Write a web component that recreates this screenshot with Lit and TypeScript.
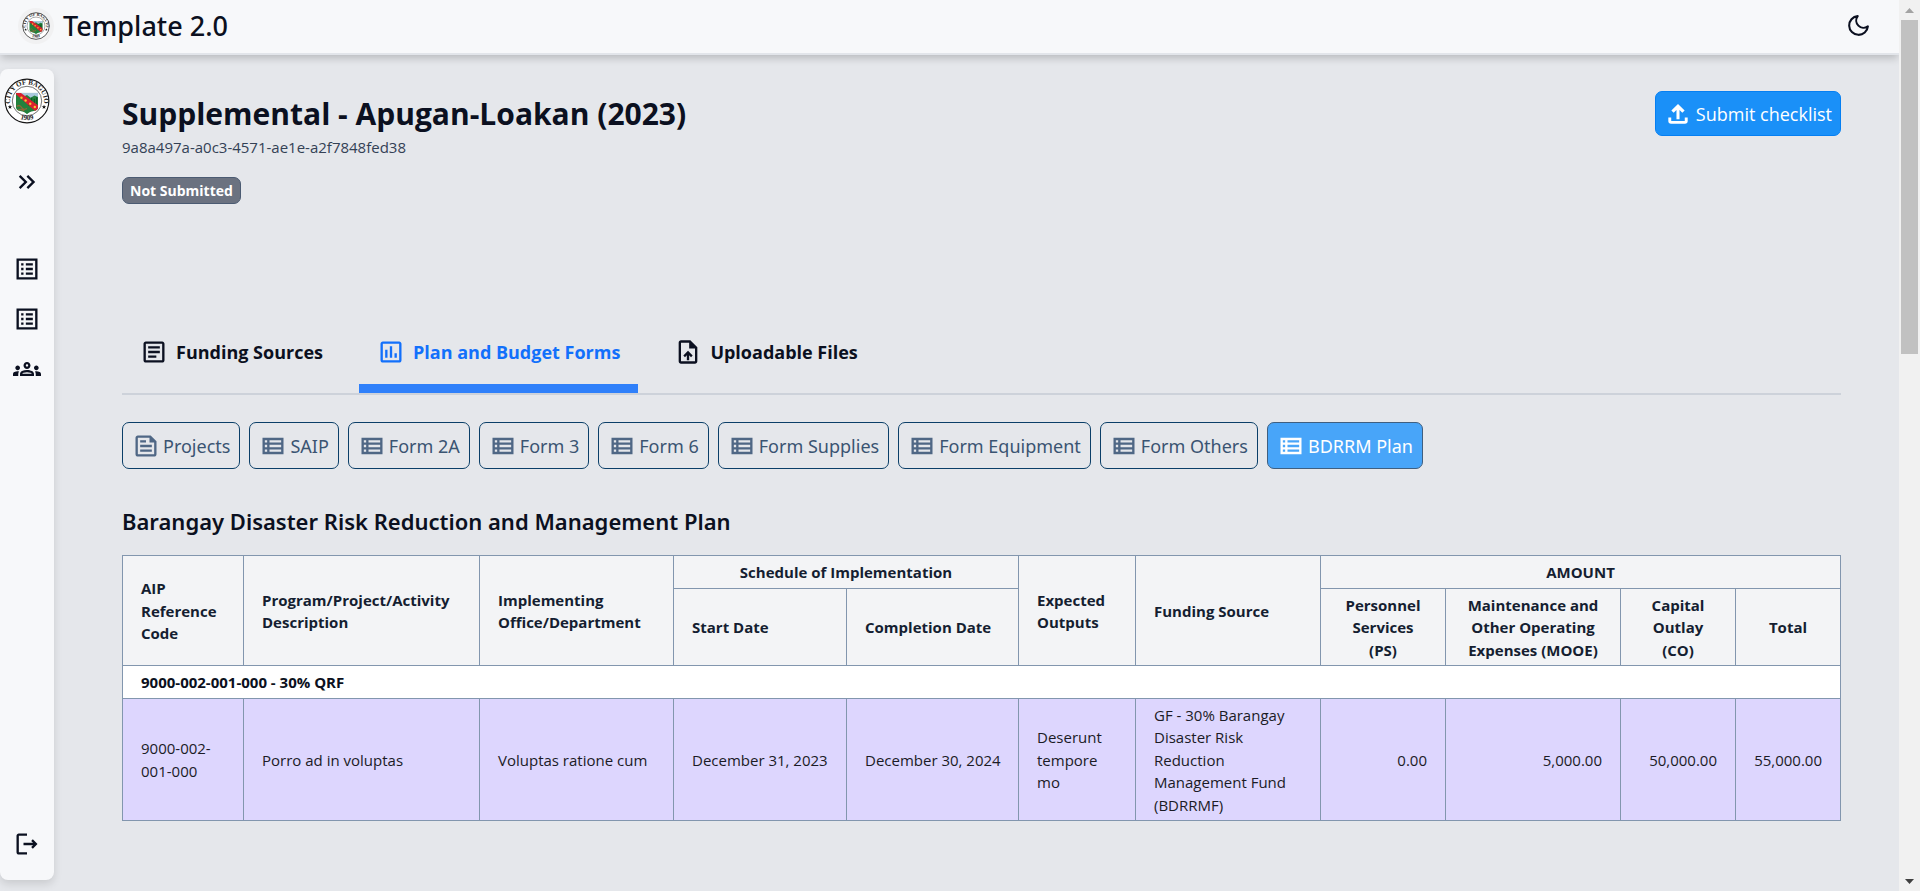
import { LitElement, html, css, svg } from "lit";
import { customElement, property, state } from "lit/decorators.js";
import { classMap } from "lit/directives/class-map.js";

const ICONS: Record<string, string> = {
  chevrons: "M6.41 6 5 7.41 9.58 12 5 16.59 6.41 18l6-6zM13 6l-1.41 1.41L16.17 12l-4.58 4.59L13 18l6-6z",
  list: "M3 3v18h18V3zm16 16H5V5h14zM11 7h6v2h-6zm0 4h6v2h-6zm0 4h6v2h-6zM7 7h2v2H7zm0 4h2v2H7zm0 4h2v2H7z",
  groups:
    "M4 13c1.1 0 2-.9 2-2s-.9-2-2-2-2 .9-2 2 .9 2 2 2zm1.13 1.1c-.37-.06-.74-.1-1.13-.1-.99 0-1.93.21-2.78.58C.48 14.9 0 15.62 0 16.43V18h4.5v-1.61c0-.83.23-1.61.63-2.29zM20 13c1.1 0 2-.9 2-2s-.9-2-2-2-2 .9-2 2 .9 2 2 2zm4 3.43c0-.81-.48-1.53-1.22-1.85-.85-.37-1.79-.58-2.78-.58-.39 0-.76.04-1.13.1.4.68.63 1.46.63 2.29V18H24v-1.57zm-7.76-2.78c-1.17-.52-2.61-.9-4.24-.9-1.63 0-3.07.39-4.24.9C6.68 14.13 6 15.21 6 16.39V18h12v-1.61c0-1.18-.68-2.26-1.76-2.74zM8.07 16c.09-.23.13-.39.91-.69.97-.38 1.99-.56 3.02-.56s2.05.18 3.02.56c.77.3.81.46.91.69H8.07zM12 8c.55 0 1 .45 1 1s-.45 1-1 1-1-.45-1-1 .45-1 1-1m0-2c-1.66 0-3 1.34-3 3s1.34 3 3 3 3-1.34 3-3-1.34-3-3-3z",
  logout: "m17 8-1.41 1.41L17.17 11H9v2h8.17l-1.58 1.58L17 16l4-4-4-4zM5 5h7V3H5c-1.1 0-2 .9-2 2v14c0 1.1.9 2 2 2h7v-2H5V5z",
  upload:
    "M10.700 16.500V8.600l-2.400 2.300L6.300 9 12 3.400 17.700 9l-2 1.900-2.400-2.300v7.900zM6 20.400c-.7 0-1.300-.2-1.700-.6-.4-.4-.6-.9-.6-1.600V15h2.500v3h11.600v-3h2.500v3.200c0 .7-.2 1.200-.6 1.600-.4.4-1 .6-1.700.6z",
  article:
    "M19 5v14H5V5h14m0-2H5c-1.1 0-2 .9-2 2v14c0 1.1.9 2 2 2h14c1.1 0 2-.9 2-2V5c0-1.1-.9-2-2-2zm-5 14H7v-2h7v2zm3-4H7v-2h10v2zm0-4H7V7h10v2z",
  chart:
    "M9 17H7v-7h2v7zm4 0h-2V7h2v10zm4 0h-2v-4h2v4zm2 2H5V5h14v14zm0-16H5c-1.1 0-2 .9-2 2v14c0 1.1.9 2 2 2h14c1.1 0 2-.9 2-2V5c0-1.1-.9-2-2-2z",
  file:
    "M14 2H6c-1.1 0-2 .9-2 2v16c0 1.1.89 2 1.99 2H18c1.1 0 2-.9 2-2V8l-6-6zm4 18H6V4h7v5h5v11zM8 15.01l1.41 1.41L11 14.84V19h2v-4.16l1.59 1.59L16 15.01 12.01 11 8 15.01z",
  feed:
    "M16 3H5c-1.1 0-2 .9-2 2v14c0 1.1.9 2 2 2h14c1.1 0 2-.9 2-2V8l-5-5zm3 16H5V5h10v4h4v10zM7 17h10v-2H7v2zm5-10H7v2h5V7zm-5 6h10v-2H7v2z",
  rows:
    "M3 5v14h18V5H3zm4 2v2H5V7h2zm-2 6v-2h2v2H5zm0 2h2v2H5v-2zm14 2H9v-2h10v2zm0-4H9v-2h10v2zm0-4H9V7h10v2z",
};

const icon = (name: string) => html`<svg class="icon" viewBox="0 0 24 24" aria-hidden="true">
  <path fill="currentColor" d=${ICONS[name]} />
</svg>`;

@customElement("city-seal")
export class CitySeal extends LitElement {
  static styles = css`
    :host { display: block; }
    svg { display: block; width: 100%; height: 100%; }
    .ring { font: 700 15px "Liberation Serif", serif; fill: #1c1c1c; }
  `;
  render() {
    return html`<svg viewBox="0 0 100 100" role="img" aria-label="City seal">
      ${svg`
        <defs>
          <path id="top" d="M15 63A37 37 0 1 1 85 63" />
          <path id="bottom" d="M22 82A46 46 0 0 0 78 82" />
          <clipPath id="shield"><path d="M26 32H74V63Q74 70 65 72Q54 74 50 79Q46 74 35 72Q26 70 26 63Z" /></clipPath>
        </defs>
        <circle cx="50" cy="50" r="47.500" fill="#fff" stroke="#151515" stroke-width="2.500" />
        <circle cx="50" cy="50" r="32" fill="#fff" stroke="#333" stroke-width="1.500" />
        <text class="ring"><textPath href="#top" startOffset="50%" text-anchor="middle">CITY OF BAGUIO</textPath></text>
        <text class="ring"><textPath href="#bottom" startOffset="50%" text-anchor="middle">1909</textPath></text>
        <path d="m13 58 1.300 3.200 3.400.2-2.600 2.200.9 3.400-3-1.900-3 1.900.9-3.400-2.600-2.200 3.400-.2z" fill="#111" />
        <path d="m87 58 1.300 3.200 3.400.2-2.600 2.200.9 3.400-3-1.900-3 1.900.9-3.400-2.600-2.200 3.400-.2z" fill="#111" />
        <g clip-path="url(#shield)">
          <rect x="24" y="31" width="52" height="50" fill="#23813c" />
          <path d="M24 31H76V42L66 38 58 43 50 37 40 42Z" fill="#a9c8dc" />
          <path d="M54 46v14M60 43v20M66 45v22M71 42v20" stroke="#0d5a25" stroke-width="3" />
          <path d="M28 62q6-5 10 2t12 2M30 70q8-4 14 2" stroke="#8a6a36" stroke-width="3" fill="none" />
          <path d="M22 32H36L78 62V76L70 74Z" fill="#d9202e" />
          <circle cx="38" cy="43" r="2.600" fill="#f6c531" />
          <circle cx="47" cy="49" r="2.600" fill="#f6c531" />
          <circle cx="57" cy="56" r="2.600" fill="#f6c531" />
          <circle cx="67" cy="63" r="2.600" fill="#f6c531" />
        </g>
      `}
    </svg>`;
  }
}

@customElement("top-bar")
export class TopBar extends LitElement {
  static styles = css`
    :host { display: block; position: relative; }
    .bar {
      display: flex; align-items: center; gap: 9px;
      height: 51px; padding: 0 28px 2px 18px;
      background: #f7f8fa; border-bottom: 2px solid #e2e5ea;
      box-shadow: 0 4px 8px -1px rgba(0, 0, 0, 0.2);
    }
    .badge { width: 28px; height: 28px; padding: 4px; border-radius: 50%; background: #f1f1f2; }
    .name { flex: 1; font-family: "Noto Sans", sans-serif; font-size: 27px; line-height: 36px; font-weight: 500; }
    button { border: 0; padding: 0; background: none; color: inherit; cursor: pointer; }
    .moon { display: block; width: 25px; height: 25px; }
  `;
  render() {
    return html`<header class="bar">
      <city-seal class="badge"></city-seal>
      <span class="name">Template 2.0</span>
      <button type="button" aria-label="Toggle dark mode">
        <svg class="moon" viewBox="0 0 24 24" fill="none" stroke="currentColor" stroke-width="2" stroke-linejoin="round" aria-hidden="true">
          <path d="M21 12.790A9 9 0 1 1 11.210 3 7 7 0 0 0 21 12.790z" />
        </svg>
      </button>
    </header>`;
  }
}

@customElement("side-rail")
export class SideRail extends LitElement {
  static styles = css`
    :host { display: block; }
    .rail {
      box-sizing: border-box; height: 100%; width: 54px;
      display: flex; flex-direction: column; align-items: center;
      padding: 9px 0 22px; border-radius: 8px; background: #f7f8fa;
      box-shadow: 0 4px 8px rgba(0, 0, 0, 0.12);
    }
    .seal { width: 46px; height: 46px; }
    button, a { display: block; border: 0; padding: 0; background: none; color: inherit; cursor: pointer; }
    .expand { margin-top: 44px; }
    nav { display: flex; flex-direction: column; gap: 22px; margin-top: 59px; }
    .out { margin-top: auto; }
    .icon { display: block; width: 28px; height: 28px; }
  `;
  render() {
    return html`<aside class="rail">
      <city-seal class="seal"></city-seal>
      <button class="expand" type="button" aria-label="Expand menu">${icon("chevrons")}</button>
      <nav aria-label="Main">
        <a href="#annual" aria-label="Annual checklists">${icon("list")}</a>
        <a href="#supplemental" aria-label="Supplemental checklists">${icon("list")}</a>
        <a href="#users" aria-label="Users">${icon("groups")}</a>
      </nav>
      <button class="out" type="button" aria-label="Log out">${icon("logout")}</button>
    </aside>`;
  }
}

@customElement("scroll-track")
export class ScrollTrack extends LitElement {
  static styles = css`
    :host { display: flex; flex-direction: column; background: #f1f1f1; }
    .arrow { height: 20px; display: grid; place-items: center; }
    .arrow svg { width: 9px; height: 5px; }
    .lane { flex: 1; padding: 0 2px; }
    .thumb { height: 334px; background: #c1c1c1; }
  `;
  render() {
    return html`<div class="arrow"><svg viewBox="0 0 9 5" aria-hidden="true"><path d="M0 5 4.500 0 9 5z" fill="#a3a3a3" /></svg></div>
      <div class="lane"><div class="thumb"></div></div>
      <div class="arrow"><svg viewBox="0 0 9 5" aria-hidden="true"><path d="M0 0h9L4.500 5z" fill="#404040" /></svg></div>`;
  }
}

interface PlanRow {
  code: string; program: string; office: string; start: string; end: string;
  outputs: string; source: string; amounts: string[];
}

const COLUMN_WEIGHTS = [121, 236, 194, 173, 172, 117, 185, 125, 175, 115, 105];

@customElement("plan-table")
export class PlanTable extends LitElement {
  static styles = css`
    :host { display: block; }
    table { width: 100%; table-layout: fixed; border-collapse: collapse; font-size: 15px; line-height: 1.5; }
    th, td { border: 1px solid #8296ae; padding: 5px 18px 4px; text-align: left; vertical-align: middle; }
    thead th { background: #f3f4f6; color: #151e31; font-weight: 700; }
    thead th.mid { text-align: center; }
    .group th { background: #fff; font-weight: 700; }
    .entry td { background: #ddd6fe; color: #1b1b26; }
    .entry td.num { text-align: right; }
    .entry td.date { white-space: nowrap; }
  `;
  @property({ attribute: false }) rows: PlanRow[] = [];
  render() {
    const total = COLUMN_WEIGHTS.reduce((a, b) => a + b, 0);
    return html`<table>
      <colgroup>
        ${COLUMN_WEIGHTS.map((w) => html`<col style="width:${(w / total) * 100}%" />`)}
      </colgroup>
      <thead>
        <tr>
          <th rowspan="2" scope="col">AIP Reference Code</th>
          <th rowspan="2" scope="col">Program/Project/Activity Description</th>
          <th rowspan="2" scope="col">Implementing Office/Department</th>
          <th class="mid" colspan="2" scope="colgroup">Schedule of Implementation</th>
          <th rowspan="2" scope="col">Expected Outputs</th>
          <th rowspan="2" scope="col">Funding Source</th>
          <th class="mid" colspan="4" scope="colgroup">AMOUNT</th>
        </tr>
        <tr>
          <th scope="col">Start Date</th>
          <th scope="col">Completion Date</th>
          <th class="mid" scope="col">Personnel Services<br />(PS)</th>
          <th class="mid" scope="col">Maintenance and Other Operating Expenses (MOOE)</th>
          <th class="mid" scope="col">Capital Outlay<br />(CO)</th>
          <th class="mid" scope="col">Total</th>
        </tr>
      </thead>
      <tbody>
        <tr class="group"><th colspan="11" scope="rowgroup">9000-002-001-000 - 30% QRF</th></tr>
        ${this.rows.map(
          (r) => html`<tr class="entry">
            <td>${r.code}</td><td>${r.program}</td><td>${r.office}</td>
            <td class="date">${r.start}</td><td class="date">${r.end}</td>
            <td>${r.outputs}</td><td>${r.source}</td>
            ${r.amounts.map((a) => html`<td class="num">${a}</td>`)}
          </tr>`
        )}
      </tbody>
    </table>`;
  }
}

const TABS = [
  { label: "Funding Sources", icon: "article" },
  { label: "Plan and Budget Forms", icon: "chart" },
  { label: "Uploadable Files", icon: "file" },
];

const FORMS = ["Projects", "SAIP", "Form 2A", "Form 3", "Form 6", "Form Supplies", "Form Equipment", "Form Others", "BDRRM Plan"];

const ROWS: PlanRow[] = [
  {
    code: "9000-002-001-000",
    program: "Porro ad in voluptas",
    office: "Voluptas ratione cum",
    start: "December 31, 2023",
    end: "December 30, 2024",
    outputs: "Deserunt tempore mo",
    source: "GF - 30% Barangay Disaster Risk Reduction Management Fund (BDRRMF)",
    amounts: ["0.00", "5,000.00", "50,000.00", "55,000.00"],
  },
];

@customElement("app-root")
export class AppRoot extends LitElement {
  static styles = css`
    :host {
      display: grid; grid-template-columns: minmax(0, 1fr) 21px; height: 100vh;
      font-family: "Open Sans", "Noto Sans", sans-serif; font-size: 15px; line-height: 24px;
      color: #0b1020; background: #e5e7eb;
    }
    .page { display: flex; flex-direction: column; min-height: 0; overflow: hidden; }
    .body { flex: 1; min-height: 0; display: flex; }
    .rail { margin: 14px 0 11px; }
    main { flex: 1; min-width: 0; overflow: hidden; padding: 36px 58px 0 68px; }
    h1, h2, p { margin: 0; }
    button { font: inherit; color: inherit; cursor: pointer; margin: 0; }
    .icon { display: block; width: 28px; height: 28px; }
    .head { display: flex; justify-content: space-between; align-items: flex-start; }
    h1 { font-size: 30px; line-height: 46px; font-weight: 700; }
    .uid { line-height: 20px; color: #334155; }
    .status {
      display: inline-block; margin-top: 20px; padding: 0 7px;
      border: 1px solid #4b5b72; border-radius: 7px; background: #6b7280; color: #fff;
      font-size: 14px; line-height: 25px; font-weight: 700;
    }
    .submit {
      display: flex; align-items: center; gap: 4px; height: 45px; padding: 0 8px;
      border: 1px solid #057ff2; border-radius: 7px; background: #1a90f8; color: #fff;
      font-size: 18px;
    }
    .tabs { display: flex; gap: 18px; margin-top: 116px; border-bottom: 2px solid #cdd2da; }
    .tab {
      display: flex; align-items: center; gap: 8px; padding: 18px 18px;
      border: 0; border-bottom: 9px solid transparent;
      background: none; font-size: 18px; line-height: 28px; font-weight: 700;
    }
    .tab.on { color: #1270fb; border-bottom-color: #2f80fa; }
    .forms { display: flex; flex-wrap: wrap; gap: 9px; margin-top: 27px; }
    .form {
      display: flex; align-items: center; gap: 3px; height: 47px; padding: 0 9px;
      border: 1px solid #0b3f68; border-radius: 7px; background: none; color: #3a5472;
      font-family: "Noto Sans", sans-serif; font-size: 18px;
    }
    .form .icon { color: #4f6785; }
    .form.on, .form.on .icon { color: #fff; }
    .form.on { background: #48a5f9; border-color: #3f5f80; }
    h2 {
      margin: 36px 0 18px; font-family: "Noto Sans", sans-serif;
      font-size: 22px; line-height: 32px; font-weight: 600;
    }
  `;

  @state() private tab = 1;
  @state() private form = FORMS.length - 1;

  render() {
    return html`<div class="page">
        <top-bar></top-bar>
        <div class="body">
          <side-rail class="rail"></side-rail>
          <main>
            <div class="head">
              <div>
                <h1>Supplemental - Apugan-Loakan (2023)</h1>
                <p class="uid">9a8a497a-a0c3-4571-ae1e-a2f7848fed38</p>
                <span class="status">Not Submitted</span>
              </div>
              <button class="submit" type="button">${icon("upload")}Submit checklist</button>
            </div>
            <div class="tabs" role="tablist">
              ${TABS.map(
                (t, i) => html`<button
                  type="button" role="tab" aria-selected=${i === this.tab ? "true" : "false"}
                  class=${classMap({ tab: true, on: i === this.tab })}
                  @click=${() => (this.tab = i)}
                >${icon(t.icon)}${t.label}</button>`
              )}
            </div>
            <div class="forms">
              ${FORMS.map(
                (f, i) => html`<button
                  type="button" class=${classMap({ form: true, on: i === this.form })}
                  @click=${() => (this.form = i)}
                >${icon(i ? "rows" : "feed")}${f}</button>`
              )}
            </div>
            <h2>Barangay Disaster Risk Reduction and Management Plan</h2>
            <plan-table .rows=${ROWS}></plan-table>
          </main>
        </div>
      </div>
      <scroll-track aria-hidden="true"></scroll-track>`;
  }
}
